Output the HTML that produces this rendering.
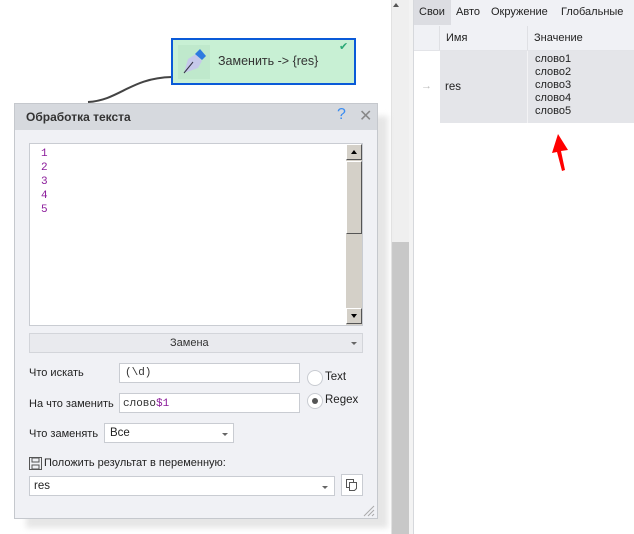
<!DOCTYPE html>
<html><head><meta charset="utf-8">
<style>
*{box-sizing:border-box;margin:0;padding:0}
body{width:634px;height:534px;position:relative;overflow:hidden;background:#fff;font-family:"Liberation Sans","DejaVu Sans",sans-serif;font-size:11.5px;color:#222}
.a{position:absolute;white-space:nowrap}
.mono{font-family:"Liberation Mono","DejaVu Sans Mono",monospace;font-size:11px}
.inp{position:absolute;background:#fff;border:1px solid #c9ccd2}
.tri{position:absolute;width:0;height:0;border-left:3px solid transparent;border-right:3px solid transparent;border-top:3px solid #666}
</style></head><body>
<div class="a" style="left:391px;top:0;width:1px;height:534px;background:#e2e2e2"></div>
<div class="a" style="left:392px;top:0;width:17px;height:242px;background:#efefef"></div>
<div class="a" style="left:392px;top:242px;width:17px;height:292px;background:#c8c8c8"></div>
<div class="a" style="left:409px;top:0;width:4px;height:534px;background:#f3f3f3"></div>
<div class="a" style="left:413px;top:0;width:1px;height:534px;background:#d6d8dc"></div>
<div class="a" style="left:393px;top:3px;width:0;height:0;border-left:3px solid transparent;border-right:3px solid transparent;border-bottom:4px solid #555"></div>

<div class="a" style="left:414px;top:0;width:220px;height:25px;background:#f0f1f5"></div>
<div class="a" style="left:414px;top:0;width:37px;height:25px;background:#dcdde2"></div>
<div class="a" style="left:419px;top:6px;font-size:11px">Свои</div>
<div class="a" style="left:456px;top:6px;font-size:11px">Авто</div>
<div class="a" style="left:491px;top:6px;font-size:11px">Окружение</div>
<div class="a" style="left:561px;top:6px;font-size:11px">Глобальные</div>
<div class="a" style="left:414px;top:25px;width:220px;height:25px;background:#f0f1f5"></div>
<div class="a" style="left:439px;top:26px;width:1px;height:24px;background:#dfe0e4"></div>
<div class="a" style="left:527px;top:26px;width:1px;height:24px;background:#dfe0e4"></div>
<div class="a" style="left:446px;top:32px;font-size:11px">Имя</div>
<div class="a" style="left:534px;top:32px;font-size:11px">Значение</div>
<div class="a" style="left:414px;top:50px;width:220px;height:1px;background:#e3e4e8"></div>
<div class="a" style="left:440px;top:51px;width:194px;height:72px;background:#e4e5e9"></div>
<div class="a" style="left:527px;top:51px;width:1px;height:72px;background:#f3f3f5"></div>
<div class="a" style="left:421px;top:80px;color:#bbb;font-size:11px">→</div>
<div class="a" style="left:445px;top:81px">res</div>
<div class="a" style="left:535px;top:53px;line-height:13px;font-size:11px">слово1<br>слово2<br>слово3<br>слово4<br>слово5</div>
<svg class="a" style="left:545px;top:130px" width="30" height="45"><polygon points="13,4 7,23 12,22 17,41 20,40 16,21 23,20" fill="#f00"/></svg>

<svg class="a" style="left:80px;top:70px" width="100" height="40"><path d="M8,32 C40,30 50,8 92,7" stroke="#444" stroke-width="2" fill="none"/></svg>

<div class="a" style="left:171px;top:38px;width:185px;height:47px;background:#c8f0d4;border:2px solid #0a5ad8"></div>
<svg class="a" style="left:178px;top:45px" width="32" height="34"><rect x="0" y="0" width="32" height="34" fill="#bfe9cc"/><polygon points="6,28 10,14 18,9 24,16 20,23" fill="#c6c9ea"/><line x1="6" y1="28" x2="15" y2="17" stroke="#334" stroke-width="1"/><polygon points="17,9 22,4 28,11 24,15" fill="#2d7be0"/></svg>
<div class="a" style="left:218px;top:54px;font-size:12.5px;color:#333">Заменить -&gt; {res}</div>
<div class="a" style="left:339px;top:40px;color:#2aa876;font-size:11px;font-weight:bold">✔</div>

<div class="a" style="left:26px;top:116px;width:362px;height:412px;background:#e6e6e6;filter:blur(3px)"></div>
<div class="a" style="left:14px;top:103px;width:364px;height:416px;background:#f0f1f5;border:1px solid #c5c8cd"></div>
<div class="a" style="left:15px;top:104px;width:362px;height:26px;background:#d6d9de"></div>
<div class="a" style="left:26px;top:110px;font-weight:bold;font-size:12px;color:#333">Обработка текста</div>
<div class="a" style="left:337px;top:106px;color:#3b8cf0;font-size:16px">?</div>
<div class="a" style="left:359px;top:106px;color:#888;font-size:16px">✕</div>

<div class="inp" style="left:29px;top:143px;width:334px;height:183px"></div>
<div class="a mono" style="left:41px;top:147px;line-height:14px;color:#8a1a9a">1<br>2<br>3<br>4<br>5</div>
<div class="a" style="left:346px;top:144px;width:16px;height:181px;background:#d4d0c8"></div>
<div class="a" style="left:346px;top:144px;width:16px;height:16px;background:#d4d0c8;border:1px solid;border-color:#fff #555 #555 #fff"></div>
<div class="a" style="left:351px;top:150px;border-left:3px solid transparent;border-right:3px solid transparent;border-bottom:4px solid #000"></div>
<div class="a" style="left:346px;top:161px;width:16px;height:73px;background:#d4d0c8;border:1px solid;border-color:#fff #555 #555 #fff"></div>
<div class="a" style="left:346px;top:308px;width:16px;height:16px;background:#d4d0c8;border:1px solid;border-color:#fff #555 #555 #fff"></div>
<div class="a" style="left:351px;top:314px;border-left:3px solid transparent;border-right:3px solid transparent;border-top:4px solid #000"></div>

<div class="a" style="left:29px;top:333px;width:334px;height:20px;background:#e9eaee;border:1px solid #d3d5da"></div>
<div class="a" style="left:170px;top:337px;color:#333;font-size:11px">Замена</div>
<div class="tri" style="left:351px;top:342px"></div>

<div class="a" style="left:29px;top:367px;font-size:11px">Что искать</div>
<div class="inp" style="left:119px;top:363px;width:181px;height:20px"></div>
<div class="a mono" style="left:125px;top:367px;color:#333">(\d)</div>
<div class="a" style="left:29px;top:398px;font-size:11px">На что заменить</div>
<div class="inp" style="left:119px;top:393px;width:181px;height:20px"></div>
<div class="a mono" style="left:123px;top:398px;color:#333">слово<span style="color:#8a1a9a">$1</span></div>

<div class="a" style="left:307px;top:370px;width:16px;height:16px;border-radius:50%;background:#fff;border:1px solid #c9ccd2"></div>
<div class="a" style="left:325px;top:371px">Text</div>
<div class="a" style="left:307px;top:393px;width:16px;height:16px;border-radius:50%;background:#fff;border:1px solid #c9ccd2"></div>
<div class="a" style="left:312px;top:398px;width:6px;height:6px;border-radius:50%;background:#555"></div>
<div class="a" style="left:325px;top:394px">Regex</div>

<div class="a" style="left:29px;top:428px;font-size:11px">Что заменять</div>
<div class="inp" style="left:104px;top:423px;width:130px;height:20px"></div>
<div class="a" style="left:110px;top:427px">Все</div>
<div class="tri" style="left:222px;top:433px"></div>

<svg class="a" style="left:29px;top:457px" width="13" height="13"><rect x="0.5" y="0.5" width="12" height="12" fill="none" stroke="#555"/><rect x="3" y="1" width="7" height="4" fill="none" stroke="#555"/><rect x="3" y="8" width="7" height="4" fill="none" stroke="#555"/></svg>
<div class="a" style="left:44px;top:457px;font-size:11px">Положить результат в переменную:</div>
<div class="inp" style="left:29px;top:476px;width:306px;height:20px"></div>
<div class="a" style="left:34px;top:480px">res</div>
<div class="tri" style="left:322px;top:486px"></div>
<div class="inp" style="left:341px;top:474px;width:22px;height:22px"></div>
<svg class="a" style="left:345px;top:478px" width="14" height="14"><rect x="1.5" y="1.5" width="7" height="8" fill="#fff" stroke="#555"/><path d="M4.5,4.5 h7 v6 l-2,2 h-5 z" fill="#fff" stroke="#555"/></svg>
<svg class="a" style="left:362px;top:504px" width="13" height="13"><path d="M2,12 L12,2 M6,12 L12,6 M10,12 L12,10" stroke="#aaa"/></svg>
</body></html>
